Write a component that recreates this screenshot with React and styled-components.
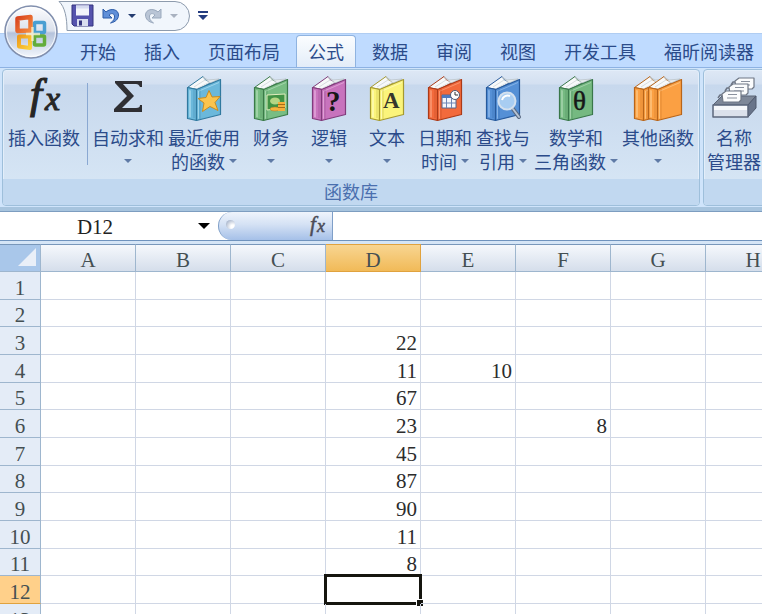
import React from "react";
import styled, { createGlobalStyle, css } from "styled-components";

const GlobalStyle = createGlobalStyle`
  * { box-sizing: border-box; }
  body {
    margin: 0;
    background: #fff;
    overflow: hidden;
    font-family: "Noto Sans CJK SC", "Noto Sans", sans-serif;
    font-size: 18px;
    color: #2b4b8a;
  }
  button, input {
    font: inherit;
    color: inherit;
    border: 0;
    padding: 0;
    margin: 0;
    background: none;
  }
`;

const Window = styled.main`
  display: flex;
  flex-direction: column;
  height: 100vh;
  overflow: hidden;
`;

const TopBar = styled.header`
  position: relative;
`;

const OfficeButton = styled.button`
  position: absolute;
  left: 2px;
  top: 3px;
  width: 58px;
  height: 58px;
  svg { display: block; }
`;

const TitleBar = styled.div`
  display: flex;
  align-items: flex-start;
  height: 33px;
  padding-left: 58px;
`;

const QuickAccess = styled.div`
  display: grid;
  width: 133px;
  height: 32px;
  > * { grid-area: 1 / 1; }
`;

const QuickButtons = styled.div`
  display: flex;
  align-items: center;
  gap: 8px;
  height: 31px;
  padding-left: 13px;
`;

const IconButton = styled.button`
  display: flex;
  align-items: center;
  justify-content: center;
`;

const CustomizeButton = styled(IconButton)`
  width: 24px;
  height: 32px;
`;

const TabBar = styled.nav`
  display: flex;
  gap: 4px;
  height: 35px;
  padding: 1px 0 0 68px;
  background: #bfdbff;
  border-top: 1px solid #b0cdf2;
  border-bottom: 1px solid #8db2e3;
  overflow: hidden;
`;

const Tab = styled.button`
  flex: none;
  height: 33px;
  padding: 0 11px;
  line-height: 28px;
  padding-bottom: 3px;
  border: 1px solid transparent;
  border-bottom: 0;
  border-radius: 4px 4px 0 0;
  white-space: nowrap;
  ${(p) =>
    p.$active &&
    css`
      background: linear-gradient(#fbfdff, #e2ecf8);
      border-color: #8fb3e0;
    `}
`;

const Ribbon = styled.section`
  display: flex;
  gap: 3px;
  padding: 1px 0 1px 2px;
  background: #cfe4fb;
  overflow: hidden;
`;

const Group = styled.div`
  flex: none;
  display: flex;
  flex-direction: column;
  border: 1px solid #9ebfdb;
  border-radius: 4px;
  background: linear-gradient(#dee8f5 0, #d3e0f1 14px, #c7d8ed 15px, #d9e8f6 100%);
  box-shadow: inset 0 0 0 1px #e3eefa;
`;

const GroupItems = styled.div`
  display: flex;
  gap: 4px;
  height: 109px;
  padding: 5px 5px 0;
`;

const CompactItems = styled(GroupItems)`
  padding: 5px 4px 0 3px;
`;

const GroupTitle = styled.div`
  height: 26px;
  line-height: 25px;
  text-align: center;
  color: #4a6fae;
  background: #c1d8f0;
  border-radius: 0 0 3px 3px;
`;

const Command = styled.button`
  display: flex;
  flex-direction: column;
  align-items: center;
  min-width: 54px;
  line-height: 24px;
  white-space: nowrap;
  svg { flex: none; overflow: visible; }
`;

const CommandLine = styled.span`
  display: flex;
  align-items: center;
  justify-content: center;
  gap: 4px;
  height: 24px;
`;

const IconSlot = styled.span`
  display: flex;
  height: 50px;
`;

const Divider = styled.div`
  width: 1px;
  height: 82px;
  margin: 8px 0 0 3px;
  background: #8aa8d2;
`;

const FormulaBar = styled.div`
  display: flex;
  height: 34px;
  background: #fff;
  border-top: 4px solid #a7c4de;
  border-bottom: 1px solid #6f93bd;
  box-shadow: inset 0 1px 0 #7d9dc0;
`;

const NameInput = styled.input`
  width: 190px;
  min-width: 0;
  padding-top: 3px;
  text-align: center;
  font-family: "Liberation Serif", serif;
  font-size: 21px;
  color: #222;
  outline: 0;
`;

const NameToggle = styled(IconButton)`
  width: 28px;
`;

const FunctionStrip = styled.div`
  display: flex;
  align-items: center;
  justify-content: space-between;
  width: 115px;
  margin-top: 1px;
  padding: 0 4px 0 7px;
  border: 1px solid #7f9fc8;
  border-width: 0 1px 0 1px;
  border-radius: 16px 0 0 16px;
  background: linear-gradient(#eff4fc, #d4e1f4 45%, #a5c0e8);
  svg { overflow: visible; }
`;

const Grip = styled.span`
  width: 9px;
  height: 9px;
  margin-bottom: 3px;
  border-radius: 50%;
  background: radial-gradient(circle at 75% 75%, #fff 20%, #8e9fbc);
`;

const FormulaInput = styled.input`
  flex: 1;
  min-width: 0;
  padding: 0 6px;
  outline: 0;
`;

const SheetArea = styled.div`
  flex: 1;
  min-height: 0;
  overflow: hidden;
  padding-top: 3px;
  background: #d5e5f6;
`;

const Sheet = styled.table`
  table-layout: fixed;
  width: 801px;
  border-spacing: 0;
  background: #fff;
  font-family: "Liberation Serif", serif;
  font-size: 21px;
  color: #2c2c2c;
  thead th { height: 28px; }
  tbody tr { height: 28px; }
  tbody tr:nth-child(3n + 2) { height: 27px; }
`;

const Col = styled.col`
  width: ${(p) => (p.$head ? 41 : 95)}px;
`;

const HeadCell = styled.th`
  padding: 3px 0 0;
  line-height: 22px;
  font-weight: 400;
  color: #444f52;
  border-top: 1px solid #7897ba;
  border-right: 1px solid #9eb6ce;
  border-bottom: 1px solid #9eb6ce;
  background: linear-gradient(#f5f8fc, #d5deeb);
  ${(p) =>
    p.$active &&
    css`
      background: linear-gradient(#f8d591, #f1ba58);
      border-color: #e0a23e;
    `}
`;

const CornerCell = styled(HeadCell)`
  padding: 0;
  background: #a9c7ea;
  svg { display: block; margin-left: auto; }
`;

const RowCell = styled.th`
  padding: 4px 0 0;
  line-height: 22px;
  font-weight: 400;
  color: #444f52;
  background: ${(p) => (p.$active ? "#ffd08a" : "#e4ecf7")};
  border-right: 1px solid #9eb6ce;
  border-bottom: 1px solid ${(p) => (p.$active ? "#e0a23e" : "#9eb6ce")};
`;

const Cell = styled.td`
  position: relative;
  padding: 4px 3px 0;
  line-height: 22px;
  text-align: right;
  border-right: 1px solid #d0d7e5;
  border-bottom: 1px solid #d0d7e5;
`;

const Selection = styled.div`
  position: absolute;
  inset: -2px;
  border: 3px solid #15150f;
  &::after {
    content: "";
    position: absolute;
    right: -4px;
    bottom: -4px;
    width: 6px;
    height: 6px;
    background: #15150f;
    border: 1px solid #fff;
    border-width: 1px 0 0 1px;
  }
`;

function Arrow({ color = "#5f7aa6", size = 8 }) {
  return (
    <svg width={size} height={size === 8 ? 4 : 6} viewBox="0 0 8 4" preserveAspectRatio="none" aria-hidden="true">
      <path d="M0 0h8L4 4z" fill={color} />
    </svg>
  );
}

function OfficeLogo() {
  return (
    <svg width="58" height="58" viewBox="0 0 58 58" aria-hidden="true">
      <defs>
        <linearGradient id="orb" x1="0" y1="0" x2="0" y2="1">
          <stop offset="0" stopColor="#fdfdfe" />
          <stop offset=".48" stopColor="#dbe1ec" />
          <stop offset=".52" stopColor="#b5c3dc" />
          <stop offset="1" stopColor="#f4f8fd" />
        </linearGradient>
        <linearGradient id="red" x1="0" y1="0" x2="1" y2="1">
          <stop offset="0" stopColor="#d9431d" /><stop offset="1" stopColor="#f58a3e" />
        </linearGradient>
        <linearGradient id="yellow" x1="0" y1="0" x2="1" y2="1">
          <stop offset="0" stopColor="#f09a1a" /><stop offset="1" stopColor="#fbd23c" />
        </linearGradient>
      </defs>
      <circle cx="29" cy="29" r="26" fill="url(#orb)" stroke="#8290ae" strokeWidth="1.5" />
      <circle cx="29" cy="29" r="24.5" fill="none" stroke="#fff" strokeOpacity=".8" />
      <g fill="none" strokeLinejoin="round">
        <rect x="32.5" y="19.5" width="10" height="10" rx="1" stroke="#4a9fd2" strokeWidth="3.5" />
        <rect x="32.5" y="33" width="10" height="9" rx="1" stroke="#63ad3b" strokeWidth="3.5" />
        <path d="M15.5 15.5l13-1.5v13.5l-13 .5z" stroke="url(#red)" strokeWidth="4.5" />
        <path d="M17 33.5h11v11.5l-11-1.5z" stroke="url(#yellow)" strokeWidth="4" />
        <path d="M24 31h14M30.5 24v14" stroke="#fff5cf" strokeWidth="2.5" opacity=".75" />
      </g>
    </svg>
  );
}

function SaveIcon() {
  return (
    <svg width="23" height="23" viewBox="0 0 23 23" aria-hidden="true">
      <path d="M1 1h21v21H3l-2-2z" fill="#5553ad" stroke="#35357f" />
      <path d="M5 1.5h13v10H5z" fill="#f2f4fb" />
      <path d="M5 1.5h13v3H5z" fill="#d5daf0" />
      <path d="M6 15h11v7H6z" fill="#d9deef" />
      <path d="M8 16.5h3v5H8z" fill="#35357f" />
    </svg>
  );
}

function UndoIcon({ redo }) {
  const fill = redo ? "#b9c5d6" : "#5f8fd8";
  const stroke = redo ? "#9aa9bd" : "#2d5ca8";
  return (
    <svg width="18" height="18" viewBox="0 0 18 18" aria-hidden="true">
      <path
        transform={redo ? "matrix(-1 0 0 1 18 0)" : undefined}
        d="M1 2v9h9L7 8c2-2 5-2 5.5 1 .4 2.500-1 5-4 7 5-1 8-4 8-8C16.5 2.5 9 .5 4 5z"
        fill={fill}
        stroke={stroke}
        strokeLinejoin="round"
      />
    </svg>
  );
}

function QuickFrame() {
  return (
    <svg width="133" height="32" viewBox="0 0 133 32" aria-hidden="true">
      <path d="M1 1.5H117a14.5 14.5 0 0 1 0 29H9C9 18 7 7 1 1.5z" fill="#f1f6fc" stroke="#8d9bad" />
    </svg>
  );
}

function FxIcon() {
  return (
    <svg width="44" height="50" viewBox="0 0 44 50" fill="#262626" stroke="#262626" fontFamily="Liberation Serif, serif" fontStyle="italic" aria-hidden="true">
      <text x="8" y="33" fontSize="43" strokeWidth="1.2">f</text>
      <text x="23" y="35" fontSize="34" strokeWidth="1">x</text>
    </svg>
  );
}

function SigmaIcon() {
  return (
    <svg width="34" height="46" viewBox="0 0 34 46" aria-hidden="true">
      <path d="M4 6h27v6h-2c-1-2-2-3-4-3H12l11 12-12 12h14c3 0 4-1 4-3h2v7H3v-3l13-13L4 8z" fill="#2f2f33" />
    </svg>
  );
}

function BookShape({ c }) {
  return (
    <g strokeLinejoin="round">
      <path d="M1.5 12.5L17 1.5l2 3 6 3-13 7z" fill="#f7f9fa" stroke={c.dark} />
      <path d="M17 2l5 3 11-1-9 4z" fill="#e9edef" stroke="#b5bfc4" strokeWidth=".7" />
      <path d="M8 12l11-7M12 13l12-6" stroke="#c9d0d4" strokeWidth=".7" />
      <path d="M1.5 12.5l9 2v31l-9-2z" fill={c.main} stroke={c.dark} strokeWidth="1.2" />
      <path d="M10.5 14.5l24-10v35l-24 6z" fill={c.main} stroke={c.dark} strokeWidth="1.2" />
      <path d="M12 16l21-9v1l-20 8.5v27l-1 .5z" fill={c.light} opacity=".7" />
      <path d="M3 15l2 .4v27l-2-.4z" fill={c.light} opacity=".6" />
      <path d="M8 15v28M14 14v30" stroke={c.dark} opacity=".35" />
    </g>
  );
}

const BOOKS = {
  recent: { main: "#6bb8db", dark: "#31799f", light: "#b4e1f2" },
  finance: { main: "#78bd83", dark: "#3b7a48", light: "#b7e0bc" },
  logic: { main: "#c873bd", dark: "#803c7b", light: "#e8b4e0" },
  text: { main: "#fbf47b", dark: "#a5992f", light: "#fffcc5" },
  date: { main: "#f26a3c", dark: "#ab3a18", light: "#fca783" },
  lookup: { main: "#5590d6", dark: "#275a9c", light: "#9ac2ee" },
  math: { main: "#75b981", dark: "#39774a", light: "#b3dcb9" },
  other: { main: "#fba043", dark: "#b8651a", light: "#ffcd8f" },
};

const MARKS = {
  recent: (
    <path d="M23 15.5l3 6.5 8-.5-5 6 3 8-8-4-7.5 5 1.5-8.500-6-4.500 8-1z" fill="#fbc44e" stroke="#c98b20" strokeLinejoin="round" />
  ),
  finance: (
    <g>
      <path d="M14 20l18-1v14l-18 2z" fill="#419345" stroke="#e2edbd" />
      <ellipse cx="22" cy="26" rx="5" ry="3.5" fill="#b5d684" />
      <ellipse cx="22" cy="34" rx="5" ry="2" fill="#f5b53c" stroke="#b27720" strokeWidth=".5" />
      <path d="M25 27h7v9h-7z" fill="#f4b03a" />
      <path d="M25 29.5h7M25 32.5h7" stroke="#a86d17" />
    </g>
  ),
  logic: <text x="15" y="36" fontSize="29">?</text>,
  text: <text x="14" y="33" fontSize="23" fill="#36372c">A</text>,
  date: (
    <g>
      <path d="M15 20h14v13H15z" fill="#f4f6fb" stroke="#566588" />
      <path d="M15 21.5h14" stroke="#4f79bd" strokeWidth="3" />
      <path d="M19.5 23v10M24.5 23v10M15 28h14" stroke="#6d85b4" />
      <circle cx="28" cy="20" r="4.5" fill="#fff" stroke="#4e5a74" />
      <path d="M28 17v3h3" fill="none" stroke="#333" />
    </g>
  ),
  lookup: (
    <g>
      <path d="M28 34l6 8" stroke="#596a83" strokeWidth="4" strokeLinecap="round" />
      <path d="M28 34l6 8" stroke="#b6c4d5" strokeWidth="2" strokeLinecap="round" />
      <circle cx="22" cy="26" r="8.5" fill="#a8cdf2" stroke="#d3e0ee" strokeWidth="2" />
      <path d="M17 25a6 6 0 0 1 8-4" fill="none" stroke="#fff" strokeWidth="2" />
    </g>
  ),
  math: <text x="15" y="35" fontSize="27" fontWeight="400" stroke="#171717" strokeWidth=".5">θ</text>,
};

function BookIcon({ kind }) {
  if (kind === "other") {
    return (
      <svg width="50" height="47" viewBox="0 0 50 47" aria-hidden="true">
        <BookShape c={BOOKS.other} />
        <g transform="translate(14 0)"><BookShape c={BOOKS.other} /></g>
      </svg>
    );
  }
  return (
    <svg width="37" height="47" viewBox="0 0 37 47" fontFamily="Liberation Serif, serif" fontWeight="700" fill="#171717" aria-hidden="true">
      <BookShape c={BOOKS[kind]} />
      {MARKS[kind]}
    </svg>
  );
}

const CARDS = [[24, 2], [18, 8], [11, 15]];

function NameManagerIcon() {
  return (
    <svg width="46" height="46" viewBox="0 0 46 46" aria-hidden="true">
      <path d="M2 30l9-9h34l-8 9z" fill="#7d8798" stroke="#5a6476" strokeLinejoin="round" />
      {CARDS.map(([x, y]) => (
        <g key={x} transform={`translate(${x} ${y})`} strokeLinejoin="round">
          <path d="M2 5h-4l-2 3" fill="none" stroke="#6c7483" strokeWidth="1.5" />
          <path d="M0 4l4-3h15v9l-2 2H1z" fill="#fbfcfd" stroke="#6f7785" strokeWidth="1.2" />
          <path d="M6 4.5h9M5 8h10" stroke="#8a919e" />
        </g>
      ))}
      <path d="M37 30l8-9v12l-8 9z" fill="#68748a" stroke="#4e596d" strokeLinejoin="round" />
      <path d="M2 30h35v12H2z" fill="#dbe1eb" stroke="#5d687d" strokeWidth="1.5" strokeLinejoin="round" />
      <path d="M3 31h33v4H3z" fill="#f6f8fb" />
    </svg>
  );
}

const TABS = ["开始", "插入", "页面布局", "公式", "数据", "审阅", "视图", "开发工具", "福昕阅读器"];

const COMMANDS = [
  { icon: <SigmaIcon />, first: "自动求和" },
  { icon: <BookIcon kind="recent" />, first: "最近使用", second: "的函数" },
  { icon: <BookIcon kind="finance" />, first: "财务" },
  { icon: <BookIcon kind="logic" />, first: "逻辑" },
  { icon: <BookIcon kind="text" />, first: "文本" },
  { icon: <BookIcon kind="date" />, first: "日期和", second: "时间" },
  { icon: <BookIcon kind="lookup" />, first: "查找与", second: "引用" },
  { icon: <BookIcon kind="math" />, first: "数学和", second: "三角函数" },
  { icon: <BookIcon kind="other" />, first: "其他函数" },
];

const COLUMNS = ["A", "B", "C", "D", "E", "F", "G", "H"];
const ROWS = Array.from({ length: 13 }, (_, i) => i + 1);
const VALUES = {
  D3: 22, D4: 11, D5: 67, D6: 23, D7: 45, D8: 87, D9: 90, D10: 11, D11: 8,
  E4: 10,
  F6: 8,
};

function RibbonCommand({ icon, first, second, menu = true }) {
  return (
    <Command>
      <IconSlot>{icon}</IconSlot>
      <CommandLine>{first}</CommandLine>
      {(second || menu) && (
        <CommandLine>
          {second}
          {menu && <Arrow />}
        </CommandLine>
      )}
    </Command>
  );
}

export default function App() {
  return (
    <Window>
      <GlobalStyle />
      <TopBar>
        <TitleBar>
          <QuickAccess>
            <QuickFrame />
            <QuickButtons>
              <IconButton aria-label="保存"><SaveIcon /></IconButton>
              <IconButton aria-label="撤消"><UndoIcon /></IconButton>
              <IconButton aria-label="撤消选项"><Arrow color="#243c70" /></IconButton>
              <IconButton aria-label="恢复"><UndoIcon redo /></IconButton>
              <IconButton aria-label="恢复选项"><Arrow color="#a9b2c0" /></IconButton>
            </QuickButtons>
          </QuickAccess>
          <CustomizeButton aria-label="自定义快速访问工具栏">
            <svg width="10" height="10" viewBox="0 0 10 10" aria-hidden="true">
              <path d="M0 0h10v2H0zM0 4h10L5 9z" fill="#243c80" />
            </svg>
          </CustomizeButton>
        </TitleBar>
        <TabBar>
          {TABS.map((t) => (
            <Tab key={t} $active={t === "公式"}>{t}</Tab>
          ))}
        </TabBar>
        <OfficeButton aria-label="Office"><OfficeLogo /></OfficeButton>
      </TopBar>
      <Ribbon>
        <Group>
          <GroupItems>
            <RibbonCommand icon={<FxIcon />} first="插入函数" menu={false} />
            <Divider />
            {COMMANDS.map((c) => <RibbonCommand key={c.first} {...c} />)}
          </GroupItems>
          <GroupTitle>函数库</GroupTitle>
        </Group>
        <Group>
          <CompactItems>
            <RibbonCommand icon={<NameManagerIcon />} first="名称" second="管理器" menu={false} />
          </CompactItems>
          <GroupTitle />
        </Group>
      </Ribbon>
      <FormulaBar>
        <NameInput aria-label="名称框" defaultValue="D12" />
        <NameToggle aria-label="名称列表"><Arrow color="#000" size={12} /></NameToggle>
        <FunctionStrip>
          <Grip />
          <IconButton aria-label="fx">
            <svg width="24" height="28" viewBox="0 0 24 28" fill="#4c4c58" stroke="#4c4c58" strokeWidth=".5" fontFamily="Liberation Serif, serif" fontStyle="italic" aria-hidden="true">
              <text x="6" y="19" fontSize="21">f</text>
              <text x="13" y="20" fontSize="18">x</text>
            </svg>
          </IconButton>
        </FunctionStrip>
        <FormulaInput aria-label="编辑栏" />
      </FormulaBar>
      <SheetArea>
        <Sheet>
          <colgroup>
            <Col $head />
            {COLUMNS.map((c) => <Col key={c} />)}
          </colgroup>
          <thead>
            <tr>
              <CornerCell aria-label="全选">
                <svg width="22" height="20" viewBox="0 0 22 20" aria-hidden="true">
                  <path d="M18 0v18H0z" fill="#e9eff8" />
                </svg>
              </CornerCell>
              {COLUMNS.map((c) => <HeadCell key={c} scope="col" $active={c === "D"}>{c}</HeadCell>)}
            </tr>
          </thead>
          <tbody>
            {ROWS.map((r) => (
              <tr key={r}>
                <RowCell scope="row" $active={r === 12}>{r}</RowCell>
                {COLUMNS.map((c) => (
                  <Cell key={c}>
                    {VALUES[c + r]}
                    {c + r === "D12" && <Selection />}
                  </Cell>
                ))}
              </tr>
            ))}
          </tbody>
        </Sheet>
      </SheetArea>
    </Window>
  );
}
